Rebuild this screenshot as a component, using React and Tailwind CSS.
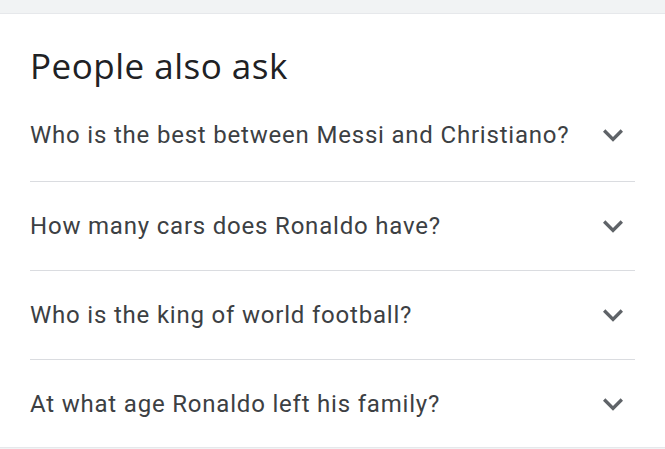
import React from 'react';

const questions = [
  'Who is the best between Messi and Christiano?',
  'How many cars does Ronaldo have?',
  'Who is the king of world football?',
  'At what age Ronaldo left his family?',
];

const Chevron = () => (
  <svg width="40" height="40" viewBox="0 0 24 24" className="shrink-0 fill-[#5f6368]">
    <path d="M16.59 8.59L12 13.17 7.41 8.59 6 10l6 6 6-6z" />
  </svg>
);

export default function App() {
  return (
    <div className="w-[665px] h-[449px] bg-white overflow-hidden font-['Roboto',sans-serif]">
      <div className="h-[14px] bg-[#f1f3f4] border-b border-[#e6e8eb]" />
      <div className="px-[30px]">
        {/* Heading */}
        <div className="h-[78px] pt-[34px]">
          <h2 className="font-['Open_Sans',sans-serif] text-[35px] tracking-[0.5px] leading-none text-[#202124]">People also ask</h2>
        </div>

        {/* Questions */}
        {questions.map((q, i) => (
          <div
            key={q}
            className={`flex items-center justify-between border-[#dadce0] ${i === 0 ? 'h-[90px] pb-[3px]' : i === 3 ? 'h-[87px]' : 'h-[89px]'} ${i < 3 ? 'border-b' : ''}`}
          >
            <span className="text-[24px] tracking-[0.8px] leading-[26px] text-[#3c4043]">{q}</span>
            <div className="mr-[2px]">
              <Chevron />
            </div>
          </div>
        ))}
      </div>
      <div className="h-[2px] bg-[#f1f3f4] border-t border-[#e6e8eb]" />
    </div>
  );
}
